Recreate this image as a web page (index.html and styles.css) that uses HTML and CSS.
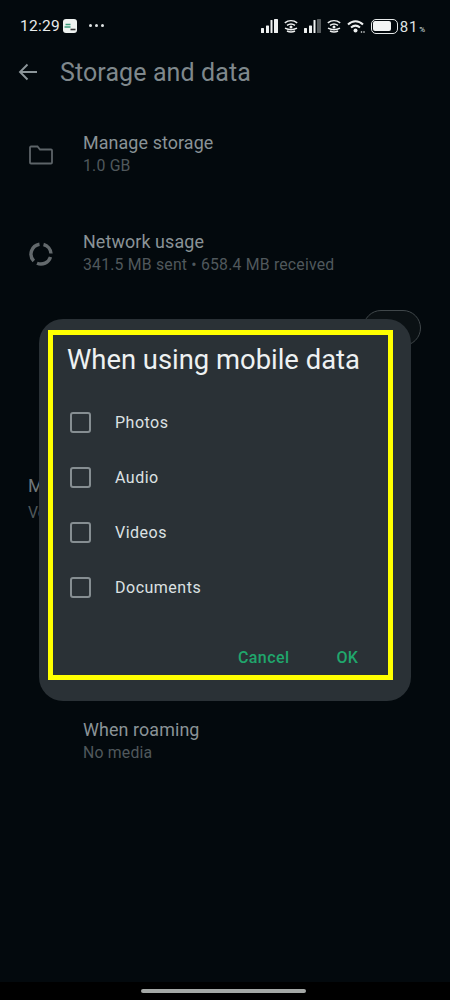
FILE: index.html
```html
<!DOCTYPE html>
<html lang="en">
<head>
<meta charset="utf-8">
<title>Storage and data</title>
<link rel="stylesheet" href="styles.css">
</head>
<body>
<div class="screen">
  <header class="status">
    <div class="status-left">
      <span class="clock">12:29</span>
      <span class="app-tile"><svg viewBox="0 0 14 14" width="14" height="14"><path d="M2.500 5.500h5M1.500 8h6" stroke="#3a9a7a" stroke-width="1.300"/><path d="M7.500 10.500h5" stroke="#333" stroke-width="1.600"/></svg></span>
      <span class="more"><i></i><i></i><i></i></span>
    </div>
    <div class="status-right">
      <svg class="ic-signal" viewBox="0 0 17 14" width="17" height="14"><rect x="0" y="9" width="3" height="5" rx=".6" fill="#eef0f0"/><rect x="5" y="6.500" width="3" height="7.500" rx=".6" fill="#eef0f0"/><rect x="9.500" y="1" width="2" height="13" rx=".6" fill="#eef0f0"/><rect x="13" y="0" width="4" height="14" rx=".6" fill="#eef0f0"/></svg>
      <svg class="ic-wifi6" viewBox="0 0 14 14" width="14" height="14"><path d="M.8 3.800C4.500 1 9.500 1 13.200 3.800M3 6.300C5.500 4.600 8.500 4.600 11 6.300" stroke="#eef0f0" stroke-width="1.500" fill="none"/><path d="M1 9.200c4 2 8 2 12 0M3 12c2.500 1.300 5.500 1.300 8 0" stroke="#eef0f0" stroke-width="1.500" fill="none"/><circle cx="7" cy="8" r="1.500" fill="#eef0f0"/></svg>
      <svg class="ic-signal" viewBox="0 0 17 14" width="17" height="14"><rect x="0" y="9" width="3" height="5" rx=".6" fill="#eef0f0"/><rect x="5" y="6.500" width="3" height="7.500" rx=".6" fill="#eef0f0"/><rect x="9.500" y="1" width="2" height="13" rx=".6" fill="#eef0f0"/><rect x="13" y="0" width="4" height="14" rx=".6" fill="#555a5c"/></svg>
      <svg class="ic-wifi6" viewBox="0 0 14 14" width="14" height="14"><path d="M.8 3.800C4.500 1 9.500 1 13.200 3.800M3 6.300C5.500 4.600 8.500 4.600 11 6.300" stroke="#eef0f0" stroke-width="1.500" fill="none"/><path d="M1 9.200c4 2 8 2 12 0M3 12c2.500 1.300 5.500 1.300 8 0" stroke="#eef0f0" stroke-width="1.500" fill="none"/><circle cx="7" cy="8" r="1.500" fill="#eef0f0"/></svg>
      <svg class="ic-wifi" viewBox="0 0 18 14" width="18" height="14"><path d="M1 5.500C5.500 1 11.500 1 16 5.500M4 8.500C7 6 10 6 13 8.500" stroke="#eef0f0" stroke-width="2" fill="none"/><circle cx="8.500" cy="11.500" r="2" fill="#eef0f0"/><circle cx="14.500" cy="13" r=".8" fill="#eef0f0"/><circle cx="17" cy="13" r=".8" fill="#eef0f0"/></svg>
      <span class="battery"><span class="battery-fill"></span></span>
      <span class="pct">81<small>%</small></span>
    </div>
  </header>

  <div class="appbar">
    <svg class="back" viewBox="0 0 20 18" width="20" height="18"><path d="M19 9H2M9.500 1.500 2 9l7.500 7.500" stroke="#8c9599" stroke-width="1.900" fill="none"/></svg>
    <h1 class="appbar-title">Storage and data</h1>
  </div>

  <main class="list">
    <section class="row row-storage">
      <span class="row-icon"><svg viewBox="0 0 24 20" width="24" height="20"><path d="M1 2.500a1 1 0 0 1 1-1h6.500l2.500 3h11a1 1 0 0 1 1 1V17.500a1 1 0 0 1-1 1H2a1 1 0 0 1-1-1z" fill="none" stroke="#5d6468" stroke-width="1.800"/></svg></span>
      <div><div class="row-title">Manage storage</div><div class="row-sub">1.0 GB</div></div>
    </section>
    <section class="row row-network">
      <span class="row-icon"><svg viewBox="0 0 24 24" width="24" height="24"><g fill="none" stroke="#63696c" stroke-width="3.400"><path d="M10.500 2.200A10 10 0 0 0 4.800 19"/><path d="M14.500 2.500A10 10 0 0 1 22 11.500"/><path d="M21.500 15A10 10 0 0 1 8 21.200"/></g></svg></span>
      <div><div class="row-title">Network usage</div><div class="row-sub">341.5 MB sent • 658.4 MB received</div></div>
    </section>
    <div class="toggle-row"><span class="toggle"></span></div>
    <section class="media">
      <div class="media-title">M</div>
      <div class="media-sub">Vo</div>
    </section>
    <section class="row row-roaming">
      <div><div class="row-title">When roaming</div><div class="row-sub">No media</div></div>
    </section>
  </main>

  <div class="navbar"><span class="home"></span></div>

  <div class="dialog">
    <div class="frame"></div>
    <h2 class="dialog-title">When using mobile data</h2>
    <ul class="options">
      <li class="option"><span class="check"></span>Photos</li>
      <li class="option"><span class="check"></span>Audio</li>
      <li class="option"><span class="check"></span>Videos</li>
      <li class="option"><span class="check"></span>Documents</li>
    </ul>
    <div class="actions"><span class="action">Cancel</span><span class="action">OK</span></div>
  </div>
</div>
</body>
</html>
```

FILE: styles.css
```css
* { box-sizing: border-box; }
html, body { margin: 0; padding: 0; }
body { background: #03090d; font-family: Roboto, "Noto Sans", sans-serif; overflow: hidden; }
.screen { position: relative; width: 450px; height: 1000px; display: flex; flex-direction: column; background: #03090d; overflow: hidden; }

.status { height: 52px; padding: 15px 25px 0 20px; display: flex; justify-content: space-between; align-items: flex-start; color: #e9ecec; flex: none; }
.status-left { display: flex; align-items: center; height: 22px; }
.clock { font-size: 15.500px; letter-spacing: .3px; width: 43px; }
.app-tile { width: 14px; height: 14px; background: #eef2f0; border-radius: 3px; display: block; margin-top: -1px; }
.app-tile svg { display: block; }
.more { display: flex; gap: 3px; margin-left: 12px; margin-top: -1px; }
.more i { width: 3px; height: 3px; border-radius: 50%; background: #dfe3e3; display: block; }
.status-right { display: flex; align-items: center; height: 22px; }
.status-right svg { display: block; flex: none; }
.ic-signal { margin-right: 6px; }
.ic-wifi6 { margin-right: 6px; }
.ic-wifi { margin-right: 6px; }
.battery { width: 27px; height: 15px; border: 1.500px solid #e6e9e9; border-radius: 5px; padding: 1.500px; display: block; margin-right: 2px; }
.battery-fill { display: block; width: 80%; height: 100%; background: #f2f4f4; border-radius: 2px; }
.pct { font-size: 15px; letter-spacing: .8px; color: #dfe3e3; padding-top: 2px; }
.pct small { font-size: 8px; letter-spacing: 0; margin-left: 1px; }

.appbar { height: 40px; padding-left: 18px; display: flex; align-items: center; flex: none; }
.back { display: block; flex: none; }
.appbar-title { margin: 0 0 0 22px; font-size: 25px; font-weight: 400; color: #7f888c; letter-spacing: .1px; }

.list { flex: 1; display: flex; flex-direction: column; padding-top: 40px; }
.row { display: flex; padding-left: 29px; align-items: center; flex: none; }
.row-icon { width: 54px; display: block; flex: none; }
.row-icon svg { display: block; }
.row-title { font-size: 17.900px; line-height: 22px; color: #8a9397; letter-spacing: .1px; }
.row-sub { font-size: 15.800px; line-height: 24px; color: #50585c; white-space: nowrap; letter-spacing: .2px; }
.row-network { margin-top: 53px; }
.toggle-row { height: 36px; margin-top: 33px; padding-left: 363px; flex: none; }
.toggle { display: block; width: 58px; height: 36px; border: 1.500px solid #40474a; border-radius: 18px; background: #0b1114; }
.media { margin-left: 28px; margin-top: 127px; flex: none; }
.media-title { font-size: 17.900px; line-height: 26px; color: #6e777b; white-space: nowrap; }
.media-sub { font-size: 15.800px; line-height: 28px; color: #50585c; white-space: nowrap; }
.row-roaming { padding-left: 83px; margin-top: 192px; }

.navbar { height: 18px; background: #000; flex: none; display: flex; justify-content: center; padding-top: 7px; }
.home { display: block; width: 165px; height: 4px; border-radius: 2px; background: #a4a8a6; margin-right: 3px; }

.dialog { position: absolute; left: 39px; top: 319px; width: 372px; height: 382px; background: #2a3136; border-radius: 24px; color: #e7ebec; }
.frame { position: absolute; left: 9px; top: 11px; width: 345px; height: 350px; border: 5px solid #ffff00; }
.dialog-title { position: absolute; left: 28px; top: 25px; margin: 0; font-size: 27.400px; line-height: 32px; font-weight: 400; color: #eef1f2; white-space: nowrap; }
.options { list-style: none; margin: 0; padding: 0; position: absolute; left: 31px; top: 76px; }
.option { height: 55px; display: flex; align-items: center; font-size: 16px; letter-spacing: .5px; color: #dde1e3; }
.check { width: 21px; height: 21px; border: 2px solid #868e92; border-radius: 3px; margin-right: 24px; display: block; flex: none; }
.actions { position: absolute; left: 199px; top: 329px; display: flex; gap: 47px; color: #20a66c; font-size: 16px; font-weight: 500; letter-spacing: .4px; line-height: 20px; }
```
